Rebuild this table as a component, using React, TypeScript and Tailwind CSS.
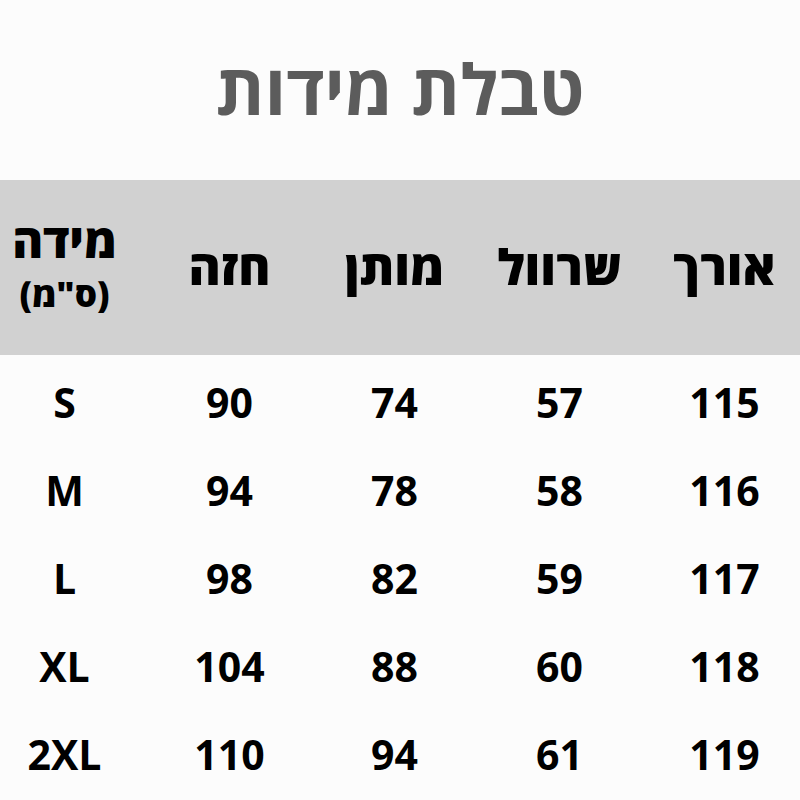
import React from "react";

const headers = ["אורך", "שרוול", "מותן", "חזה"];

const rows = [
  { size: "S", chest: 90, waist: 74, sleeve: 57, length: 115 },
  { size: "M", chest: 94, waist: 78, sleeve: 58, length: 116 },
  { size: "L", chest: 98, waist: 82, sleeve: 59, length: 117 },
  { size: "XL", chest: 104, waist: 88, sleeve: 60, length: 118 },
  { size: "2XL", chest: 110, waist: 94, sleeve: 61, length: 119 },
];

export default function App() {
  return (
    <div
      className="w-[800px] h-[800px] overflow-hidden bg-[#fcfcfc] text-black"
      style={{ fontFamily: '"Open Sans", "DejaVu Sans", sans-serif' }}
    >
      <div className="h-[180px] flex items-center justify-center pb-[4px]">
        <h1 dir="rtl" className="text-[70px] font-bold text-[#5c5c5c] leading-none">
          טבלת מידות
        </h1>
      </div>

      <div className="h-[175px] bg-[#d1d1d1] overflow-hidden">
        <div dir="rtl" className="grid grid-cols-[repeat(5,165px)] h-full mr-[-7px]">
          {headers.map((h) => (
            <div key={h} className="flex items-center justify-center text-[49px] font-extrabold pb-[2px]">
              {h}
            </div>
          ))}
          <div className="flex flex-col items-center justify-center leading-none pb-[8px]">
            <span className="text-[47px] font-extrabold">מידה</span>
            <span className="text-[35px] font-extrabold mt-[12px]">(ס"מ)</span>
          </div>
        </div>
      </div>

      <div className="overflow-hidden pt-[4px]">
        <div dir="rtl" className="grid grid-cols-[repeat(5,165px)] mr-[-7px]">
          {rows.map((r) => (
            <React.Fragment key={r.size}>
              {[r.length, r.sleeve, r.waist, r.chest, r.size].map((v, i) => (
                <div key={i} dir="ltr" className="h-[88px] flex items-center justify-center text-[41px] font-bold">
                  {v}
                </div>
              ))}
            </React.Fragment>
          ))}
        </div>
      </div>
    </div>
  );
}
